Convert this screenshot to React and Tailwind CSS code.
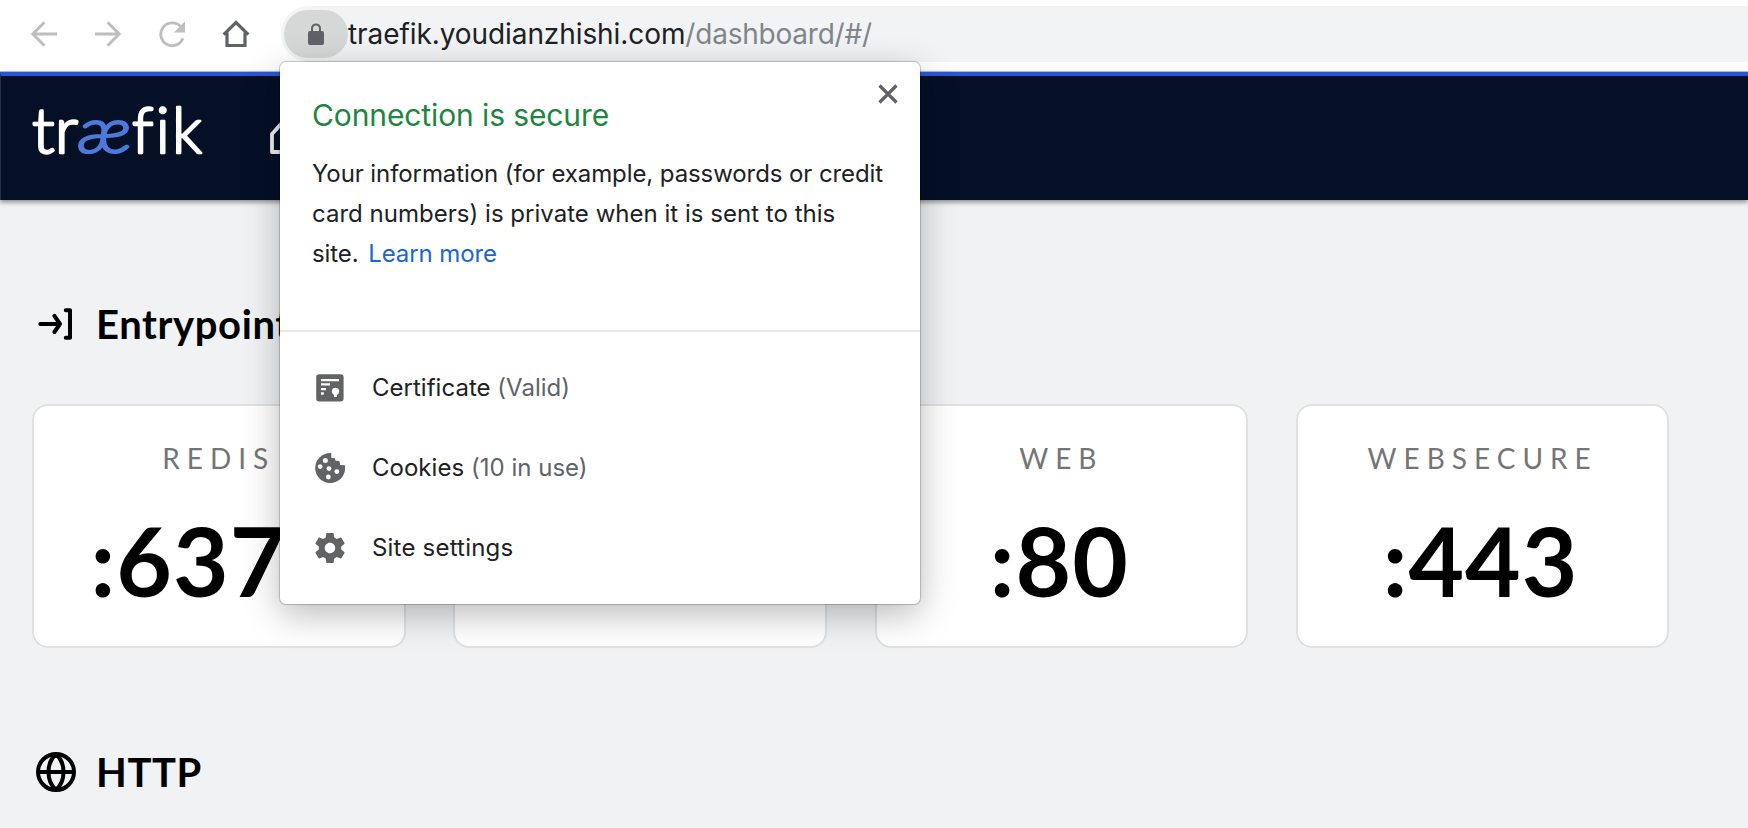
import React from "react";

const ENTRYPOINTS = [
  { name: "REDIS", port: ":6379" },
  { name: "", port: "" },
  { name: "WEB", port: ":80" },
  { name: "WEBSECURE", port: ":443" },
];

function BackIcon() {
  return (
    <svg viewBox="0 0 26 26" className="size-[26px]" fill="none" stroke="#bdbebf" strokeWidth="2.9">
      <path d="M26 13H2M13.5 1.2 1.9 13l11.6 11.8" />
    </svg>
  );
}

function ForwardIcon() {
  return (
    <svg viewBox="0 0 26 26" className="size-[26px]" fill="none" stroke="#bdbebf" strokeWidth="2.9">
      <path d="M0 13h24M12.5 1.2 24.1 13 12.5 24.8" />
    </svg>
  );
}

function ReloadIcon() {
  return (
    <svg viewBox="0 0 28 28" className="size-[28px]">
      <path d="M22.6 6.6A11.4 11.4 0 1 0 24.9 18.2" fill="none" stroke="#bdbebf" strokeWidth="2.9" />
      <path d="M27 1.2v11.2H16z" fill="#bdbebf" />
    </svg>
  );
}

function HomeIcon() {
  return (
    <svg viewBox="0 0 28 28" className="size-[28px]" fill="none" stroke="#5f6368" strokeWidth="3.2">
      <path d="M1.6 14.6 14 2.6l12.4 12" />
      <path d="M5 12.5v13h18v-13" />
    </svg>
  );
}

function LockIcon() {
  return (
    <svg viewBox="0 0 16 22" className="h-[22px] w-4">
      <path d="M4 9V5.4a4 4 0 0 1 8 0V9" fill="none" stroke="#5f6368" strokeWidth="2" />
      <rect x="0" y="8" width="16" height="14" rx="2" fill="#5f6368" />
    </svg>
  );
}

function CloseIcon() {
  return (
    <svg viewBox="0 0 20 20" className="size-5" stroke="#5f6368" strokeWidth="3.2">
      <path d="M1.5 1.5 18.5 18.5M18.5 1.5 1.5 18.5" />
    </svg>
  );
}

function CertificateIcon() {
  return (
    <svg viewBox="0 0 30 30" className="size-[30px]">
      <rect x="1.2" y="1.2" width="27.4" height="27.4" rx="3" fill="#626365" />
      <g fill="#fff">
        <path d="M6 6h18v2.2H6zM6 10.2h9v2.2H6zM6 15h5v2.2H6zM6 19.3h2.8v2.4H6z" />
        <circle cx="20.5" cy="18.3" r="3.6" />
        <path d="M19 20h3v4h-3z" />
      </g>
    </svg>
  );
}

function CookieIcon() {
  return (
    <svg viewBox="0 0 30 30" className="size-[30px]">
      <path
        d="M16.2 0.1A15 15 0 1 0 29.9 12.2L25.2 12 24.4 8 20.6 7.7 19.8 5.2 16.4 5z"
        fill="#626365"
      />
      <g fill="#fff">
        <circle cx="10.4" cy="7.6" r="2.5" />
        <circle cx="5.2" cy="13.6" r="2.4" />
        <circle cx="14" cy="15.6" r="2.4" />
        <circle cx="21.8" cy="18.6" r="2.4" />
        <circle cx="13.4" cy="24" r="2.4" />
      </g>
    </svg>
  );
}

function GearIcon() {
  return (
    <svg viewBox="2.1 2 19.8 20" className="size-[30px]">
      <path
        fill="#626365"
        d="M19.43 12.98c.04-.32.07-.64.07-.98s-.03-.66-.07-.98l2.11-1.65c.19-.15.24-.42.12-.64l-2-3.46c-.12-.22-.39-.3-.61-.22l-2.49 1c-.52-.4-1.08-.73-1.69-.98l-.38-2.65C14.46 2.18 14.25 2 14 2h-4c-.25 0-.46.18-.49.42l-.38 2.65c-.61.25-1.17.59-1.69.98l-2.49-1c-.23-.09-.49 0-.61.22l-2 3.46c-.13.22-.07.49.12.64l2.11 1.65c-.04.32-.07.65-.07.98s.03.66.07.98l-2.11 1.65c-.19.15-.24.42-.12.64l2 3.46c.12.22.39.3.61.22l2.49-1c.52.4 1.08.73 1.69.98l.38 2.65c.03.24.24.42.49.42h4c.25 0 .46-.18.49-.42l.38-2.65c.61-.25 1.17-.59 1.69-.98l2.49 1c.23.09.49 0 .61-.22l2-3.46c.12-.22.07-.49-.12-.64l-2.11-1.65zM12 15.5c-1.93 0-3.5-1.57-3.5-3.5s1.57-3.5 3.5-3.5 3.5 1.57 3.5 3.5-1.57 3.5-3.5 3.5z"
      />
    </svg>
  );
}

function EntryIcon() {
  return (
    <svg viewBox="0 0 48 48" className="size-12" fill="none" stroke="#000" strokeWidth="4" strokeLinecap="round" strokeLinejoin="round">
      <path d="M8.3 24H28M22.4 15.8 28 24l-5.6 8" />
      <path d="M33.8 10.2h4.2v27.6h-4.2" />
    </svg>
  );
}

function GlobeIcon() {
  return (
    <svg viewBox="0 0 48 48" className="size-12" fill="none" stroke="#000" strokeWidth="4">
      <circle cx="24" cy="24" r="18" />
      <path d="M6 24h36M24 6c-10 9-10 27 0 36M24 6c10 9 10 27 0 36" />
    </svg>
  );
}

function Logo() {
  return (
    <svg viewBox="0 0 176 84" className="h-21 w-44" fontFamily="Lato, sans-serif" fontWeight="300" strokeLinejoin="round">
      <g fill="#fff" stroke="#fff" strokeWidth="2.4" fontSize="63" style={{ fontVariantLigatures: "none" }}>
        <text x="0" y="61" textLength="46" lengthAdjust="spacingAndGlyphs">tr</text>
        <text x="100" y="61" textLength="70" lengthAdjust="spacing">fik</text>
      </g>
      <text x="46" y="61" fontSize="63" fontStyle="italic" fill="#4d79dd" stroke="#4d79dd" strokeWidth="2.2" textLength="54" lengthAdjust="spacingAndGlyphs">æ</text>
    </svg>
  );
}

function Toolbar() {
  return (
    <header className="flex h-[72px] items-start border-b border-[#c3c5c8] bg-white pt-1.5 pl-[31px]">
      <div className="flex h-14 items-center">
        <BackIcon />
        <div className="ml-[38px]"><ForwardIcon /></div>
        <div className="ml-[37px]"><ReloadIcon /></div>
        <div className="ml-[36px]"><HomeIcon /></div>
      </div>
      <div className="ml-[31px] flex h-14 flex-1 items-center rounded-l-full bg-[#f1f3f4] pl-[3px]">
        <div className="flex h-12 w-16 items-center justify-center rounded-full bg-[#d6d8d8]">
          <LockIcon />
        </div>
        <div className="text-[28px] leading-10 tracking-[-0.08px] whitespace-nowrap text-[#202124]">
          traefik.youdianzhishi.com<span className="tracking-[-0.22px] text-[#80868b]">/dashboard/#/</span>
        </div>
      </div>
    </header>
  );
}

function NavBar() {
  return (
    <nav className="flex h-32 items-start border-t-4 border-l border-t-[#2459d1] border-l-[#26304a] bg-[#050f26] pt-4 pl-[31px] shadow-[0_2px_5px_rgba(0,0,0,0.45)]">
      <Logo />
      <svg viewBox="0 0 44 44" className="mt-[21px] ml-[60px] size-11" fill="none" stroke="#f1f1f1" strokeWidth="3.8" strokeLinejoin="round">
        <path d="M4 21 22 1l18 20V39H28V27H16v12H4z" />
      </svg>
    </nav>
  );
}

function SectionTitle({ icon, children }) {
  return (
    <h2 className="flex h-12 items-center gap-4 font-[Lato] text-[40px] leading-[48px] font-bold tracking-[0.6px] text-black">
      {icon}
      {children}
    </h2>
  );
}

function EntrypointCard({ name, port }) {
  return (
    <div className="flex h-[244px] flex-col items-center rounded-2xl border-2 border-[#e0e1e2] bg-white pt-8 font-[Lato]">
      <div className="h-10 text-[28px] leading-10 tracking-[7px] text-[#757575]">{name}</div>
      <div className="mt-6 pr-1 text-[96px] leading-[116px] font-bold tracking-[1px] text-black">{port}</div>
    </div>
  );
}

function PopupRow({ icon, label, detail }) {
  return (
    <div className="flex h-20 items-center pl-[35px] text-2xl leading-10 text-[#202124]">
      {icon}
      <div className={detail ? "ml-[27px] tracking-[0.02px] whitespace-pre" : "ml-[27px] tracking-[0.2px]"}>
        {label}
        {detail && <span className="text-[#5f6368]"> {detail}</span>}
      </div>
    </div>
  );
}

function ConnectionPopup() {
  return (
    <aside className="absolute top-[62px] left-[280px] h-[542px] w-[640px] rounded-md bg-white shadow-[0_0_1px_1px_rgba(0,0,0,0.2),0_10px_36px_rgba(0,0,0,0.28)]">
      <div className="h-[268px] pt-[33px] pl-8">
        <h1 className="text-[30px] leading-10 tracking-[-0.11px] text-[#1e8640]">Connection is secure</h1>
        <p className="mt-[19px] text-2xl leading-10 tracking-[-0.09px] whitespace-nowrap text-[#202124]">
          Your information (for example, passwords or credit
          <br />
          <span className="tracking-[0.02px]">card numbers) is private when it is sent to this</span>
          <br />
          site. <a className="ml-[3px] text-[#1a67d2]">Learn more</a>
        </p>
      </div>
      <div className="border-t-2 border-[#e8e8e8] pt-4">
        <PopupRow icon={<CertificateIcon />} label="Certificate" detail="(Valid)" />
        <PopupRow icon={<CookieIcon />} label="Cookies" detail="(10 in use)" />
        <PopupRow icon={<GearIcon />} label="Site settings" />
      </div>
      <button className="absolute top-[22px] right-[22px]" aria-label="Close">
        <CloseIcon />
      </button>
    </aside>
  );
}

export default function App() {
  return (
    <div className="relative h-[828px] w-[1748px] overflow-hidden bg-[#f1f2f4] font-[Inter,sans-serif]">
      <Toolbar />
      <NavBar />
      <main className="pt-[100px] pl-8">
        <SectionTitle icon={<EntryIcon />}>Entrypoints</SectionTitle>
        <div className="mt-14 grid w-[1637.4px] grid-cols-4 gap-[47.7px]">
          {ENTRYPOINTS.map((entry, i) => (
            <EntrypointCard key={i} {...entry} />
          ))}
        </div>
        <div className="mt-[100px]">
          <SectionTitle icon={<GlobeIcon />}>HTTP</SectionTitle>
        </div>
      </main>
      <ConnectionPopup />
    </div>
  );
}
